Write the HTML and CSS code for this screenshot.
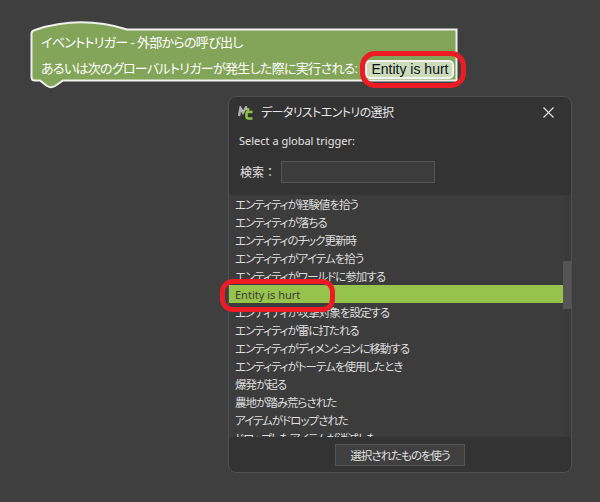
FILE: index.html
```html
<!DOCTYPE html>
<html lang="ja">
<head>
<meta charset="utf-8">
<title>Global trigger</title>
<link rel="stylesheet" href="styles.css">
</head>
<body>
<div class="canvas">
  <div class="block">
    <svg class="block-shape" width="430" height="70" viewBox="0 0 430 70">
      <path class="block-fill" d="M1.500 14.500 Q1.500 12 5 11 Q50 -4 97 10.500 L426.500 10.500 L426.500 61.500 L33 61.500 L25 67 Q21 69.500 17 67 L10 61.500 L5 61.500 Q1.500 61.500 1.500 58 Z"/>
    </svg>
    <div class="block-row">イベントトリガー - 外部からの呼び出し</div>
    <div class="block-row block-row-field">
      <span>あるいは次のグローバルトリガーが発生した際に実行される:</span>
      <span class="field">Entity is hurt</span>
    </div>
  </div>
  <div class="ring ring-field"></div>

  <section class="dialog">
    <header class="titlebar">
      <svg class="logo" width="16" height="14" viewBox="0 0 16 14">
        <path d="M1 10 L2.500 2 L5 6.500 L8 1.500 L8.500 4" fill="none" stroke="#b4b4b4" stroke-width="2.400"/>
        <path d="M14.500 6 L10 6 Q8.500 6 8.500 8 L8.500 10 Q8.500 12.500 10.500 12.500 L14.500 12.500 M10 2 L10 6" fill="none" stroke="#8fc043" stroke-width="2.600"/>
      </svg>
      <span class="title">データリストエントリの選択</span>
      <svg class="close" width="11" height="11" viewBox="0 0 11 11">
        <path d="M0.500 0.500 L10.500 10.500 M10.500 0.500 L0.500 10.500" stroke="#e8e8e8" stroke-width="1.100" fill="none"/>
      </svg>
    </header>
    <p class="prompt">Select a global trigger:</p>
    <div class="search">
      <label class="search-label">検索：</label>
      <div class="search-input"></div>
    </div>
    <div class="list-wrap">
      <ul class="list">
        <li>エンティティが経験値を拾う</li>
        <li>エンティティが落ちる</li>
        <li>エンティティのチック更新時</li>
        <li>エンティティがアイテムを拾う</li>
        <li>エンティティがワールドに参加する</li>
        <li class="selected">Entity is hurt</li>
        <li>エンティティが攻撃対象を設定する</li>
        <li>エンティティが雷に打たれる</li>
        <li>エンティティがディメンションに移動する</li>
        <li>エンティティがトーテムを使用したとき</li>
        <li>爆発が起る</li>
        <li>農地が踏み荒らされた</li>
        <li>アイテムがドロップされた</li>
        <li>ドロップしたアイテムが消滅した</li>
      </ul>
      <div class="scrollbar"><div class="thumb"></div></div>
    </div>
    <footer class="footer">
      <button class="use-btn">選択されたものを使う</button>
    </footer>
  </section>
  <div class="ring ring-row"></div>
</div>
</body>
</html>
```
FILE: styles.css
```css
html, body {
  margin: 0;
  padding: 0;
  background: #3f3f3f;
}
.canvas {
  position: relative;
  width: 600px;
  height: 502px;
  overflow: hidden;
  font-family: "Noto Sans", "Noto Sans CJK JP", sans-serif;
  font-feature-settings: "palt";
}
.block {
  position: absolute;
  left: 30px;
  top: 19px;
  width: 430px;
  height: 70px;
  box-sizing: border-box;
  padding: 14px 0 0 11px;
  color: #fff;
  font-size: 13px;
  letter-spacing: -0.7px;
  font-family: "Liberation Sans", "Noto Sans CJK JP", sans-serif;
}
.block-shape {
  position: absolute;
  left: 0;
  top: 0;
}
.block-fill {
  fill: #83a55a;
  stroke: #f0f0ec;
  stroke-width: 2;
}
.block-row {
  position: relative;
  height: 20px;
  line-height: 20px;
  white-space: nowrap;
}
.block-row-field {
  display: flex;
  align-items: center;
  gap: 8px;
  margin-top: 6px;
}
.field {
  background: #ccdcb8;
  border: 2px solid #f2f4ee;
  border-radius: 5px;
  color: #0c1020;
  font-size: 14px;
  letter-spacing: 0;
  line-height: 15px;
  padding: 0 4px;
}
.ring {
  position: absolute;
  border: 5px solid #ed1c24;
  box-sizing: border-box;
}
.ring-field {
  left: 360px;
  top: 51px;
  width: 106px;
  height: 37px;
  border-radius: 15px;
}
.ring-row {
  left: 220px;
  top: 279px;
  width: 115px;
  height: 33px;
  border-radius: 13px;
}
.dialog {
  position: absolute;
  left: 228px;
  top: 96px;
  width: 344px;
  height: 377px;
  box-sizing: border-box;
  background: #333333;
  border: 1px solid #505050;
  border-radius: 8px;
  color: #e4e4e4;
  font-size: 11px;
  display: flex;
  flex-direction: column;
  overflow: hidden;
}
.titlebar {
  display: flex;
  align-items: center;
  height: 31px;
  padding: 0 17px 0 9px;
  flex: none;
}
.logo {
  flex: none;
}
.title {
  margin-left: 7px;
  flex: 1;
  line-height: 31px;
  font-size: 12px;
  letter-spacing: -0.6px;
}
.close {
  flex: none;
}
.prompt {
  margin: 0;
  padding: 4px 0 0 10px;
  height: 18px;
  line-height: 18px;
  flex: none;
}
.search {
  display: flex;
  align-items: center;
  margin-top: 11px;
  padding-left: 11px;
  height: 22px;
  flex: none;
}
.search-label {
  width: 41px;
  font-size: 12px;
  font-feature-settings: normal;
}
.search-input {
  width: 152px;
  height: 20px;
  background: #3c3c3c;
  border: 1px solid #555555;
}
.list-wrap {
  margin-top: 12px;
  height: 242px;
  display: flex;
  flex: none;
  overflow: hidden;
}
.list {
  list-style: none;
  margin: 0;
  padding: 0;
  width: 335px;
  background: #3c3c3c;
  overflow: hidden;
}
.list li {
  height: 18px;
  line-height: 20px;
  padding-left: 6px;
  font-size: 11.5px;
  letter-spacing: -1px;
  color: #dedede;
  white-space: nowrap;
}
.list li.selected {
  background: #95c34b;
  color: #3b3b3b;
  font-size: 11px;
  letter-spacing: 0;
}
.scrollbar {
  width: 8px;
  background: #3a3a3a;
  padding-top: 66px;
  box-sizing: border-box;
}
.thumb {
  height: 48px;
  background: #555555;
}
.footer {
  display: flex;
  justify-content: center;
  padding-top: 7px;
}
.use-btn {
  width: 130px;
  height: 22px;
  padding: 0;
  background: #3f3f3f;
  border: 1px solid #555555;
  color: #e0e0e0;
  font: 11.5px "Noto Sans", "Noto Sans CJK JP", sans-serif;
  font-feature-settings: "palt";
  letter-spacing: -1px;
}
```
